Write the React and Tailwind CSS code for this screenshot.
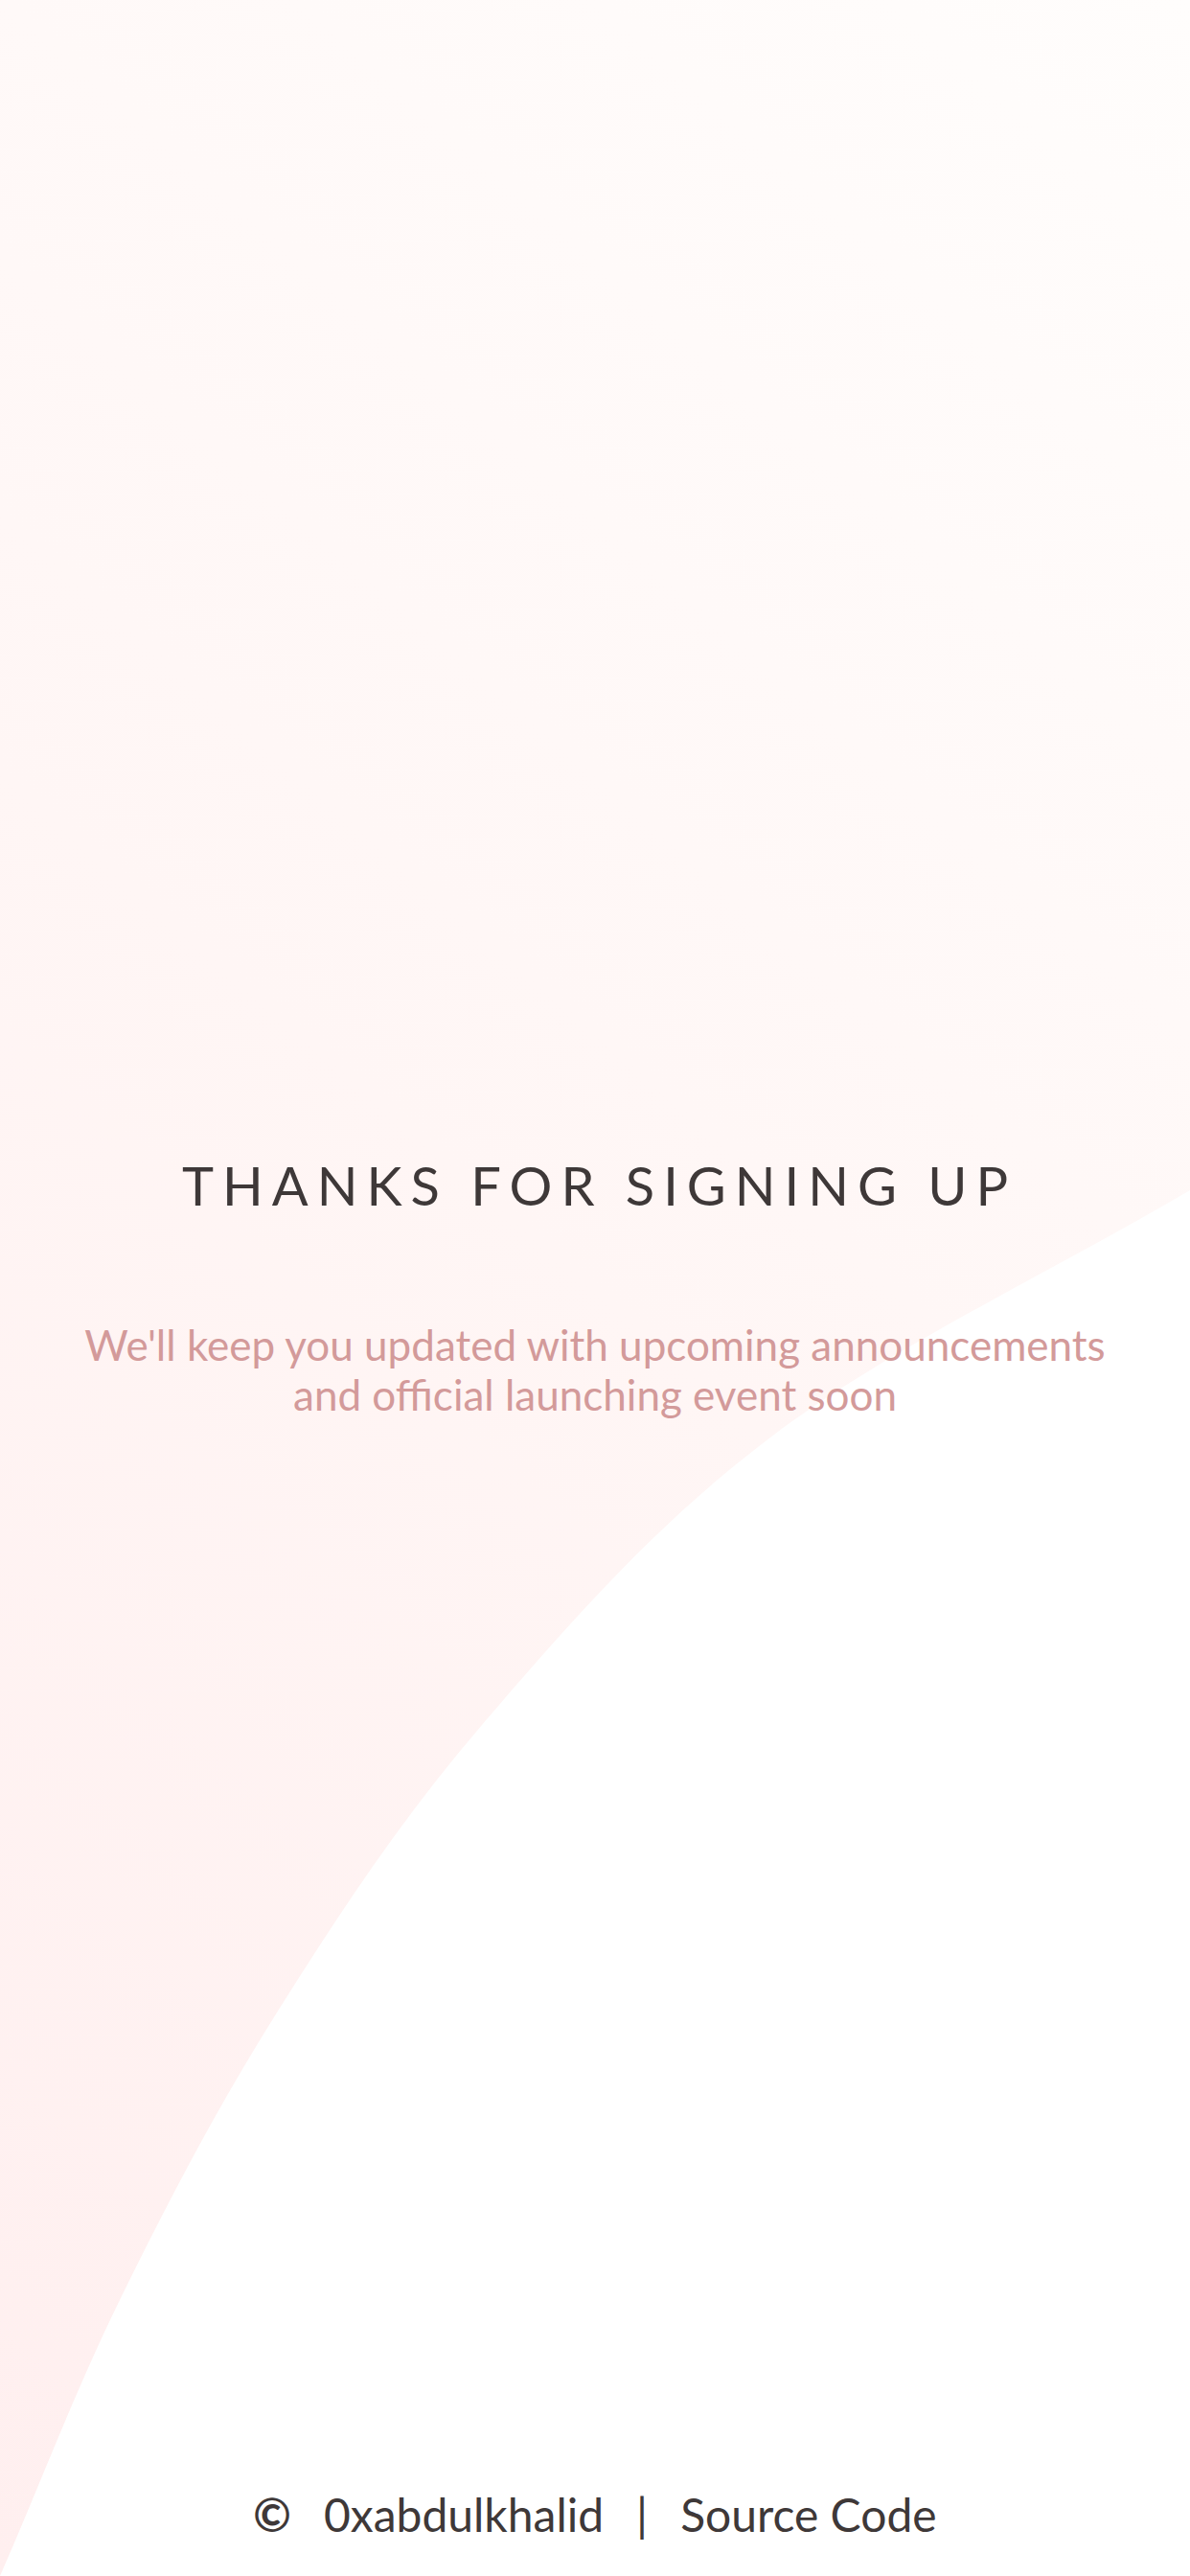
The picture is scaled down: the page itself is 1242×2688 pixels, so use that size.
import React from "react";

const font = { fontFamily: "Lato, 'Open Sans', sans-serif" };

const BackgroundCurve = () => (
  <svg
    className="absolute inset-0 h-full w-full"
    viewBox="0 0 1242 2688"
    preserveAspectRatio="none"
    aria-hidden="true"
  >
    <path
      d="M1242 1242 C1096 1328 927 1407 804 1500 C681 1593 589 1700 503 1800 C417 1900 352 2000 289 2100 C226 2200 173 2302 125 2400 C77 2498 42 2592 0 2688 L1242 2688 Z"
      fill="#ffffff"
    />
  </svg>
);

const App = () => {
  return (
    <div
      className="relative flex h-[2688px] w-full flex-col overflow-hidden bg-[linear-gradient(221deg,#fffdfc_0%,#fff6f5_50%,#ffefef_100%)]"
      style={font}
    >
      <BackgroundCurve />

      <main className="relative z-10 flex flex-1 flex-col items-center justify-center pt-[90px] text-center">
        <h1 className="pl-[9px] text-[56px] leading-[56px] font-normal tracking-[9px] text-[#3e3838]">
          THANKS FOR SIGNING UP
        </h1>
        <p className="mt-[112px] text-[44px] leading-[52px] text-[#d39a9a]">
          We'll keep you updated with upcoming announcements
          <br />
          and official launching event soon
        </p>
      </main>

      <footer className="relative z-10 flex items-center justify-center gap-[34px] pb-[40px] text-[48px] leading-[48px] text-[#3e3838]">
        <span className="font-bold">©</span>
        <a href="#">0xabdulkhalid</a>
        <span>|</span>
        <a href="#">Source Code</a>
      </footer>
    </div>
  );
};

export default App;
